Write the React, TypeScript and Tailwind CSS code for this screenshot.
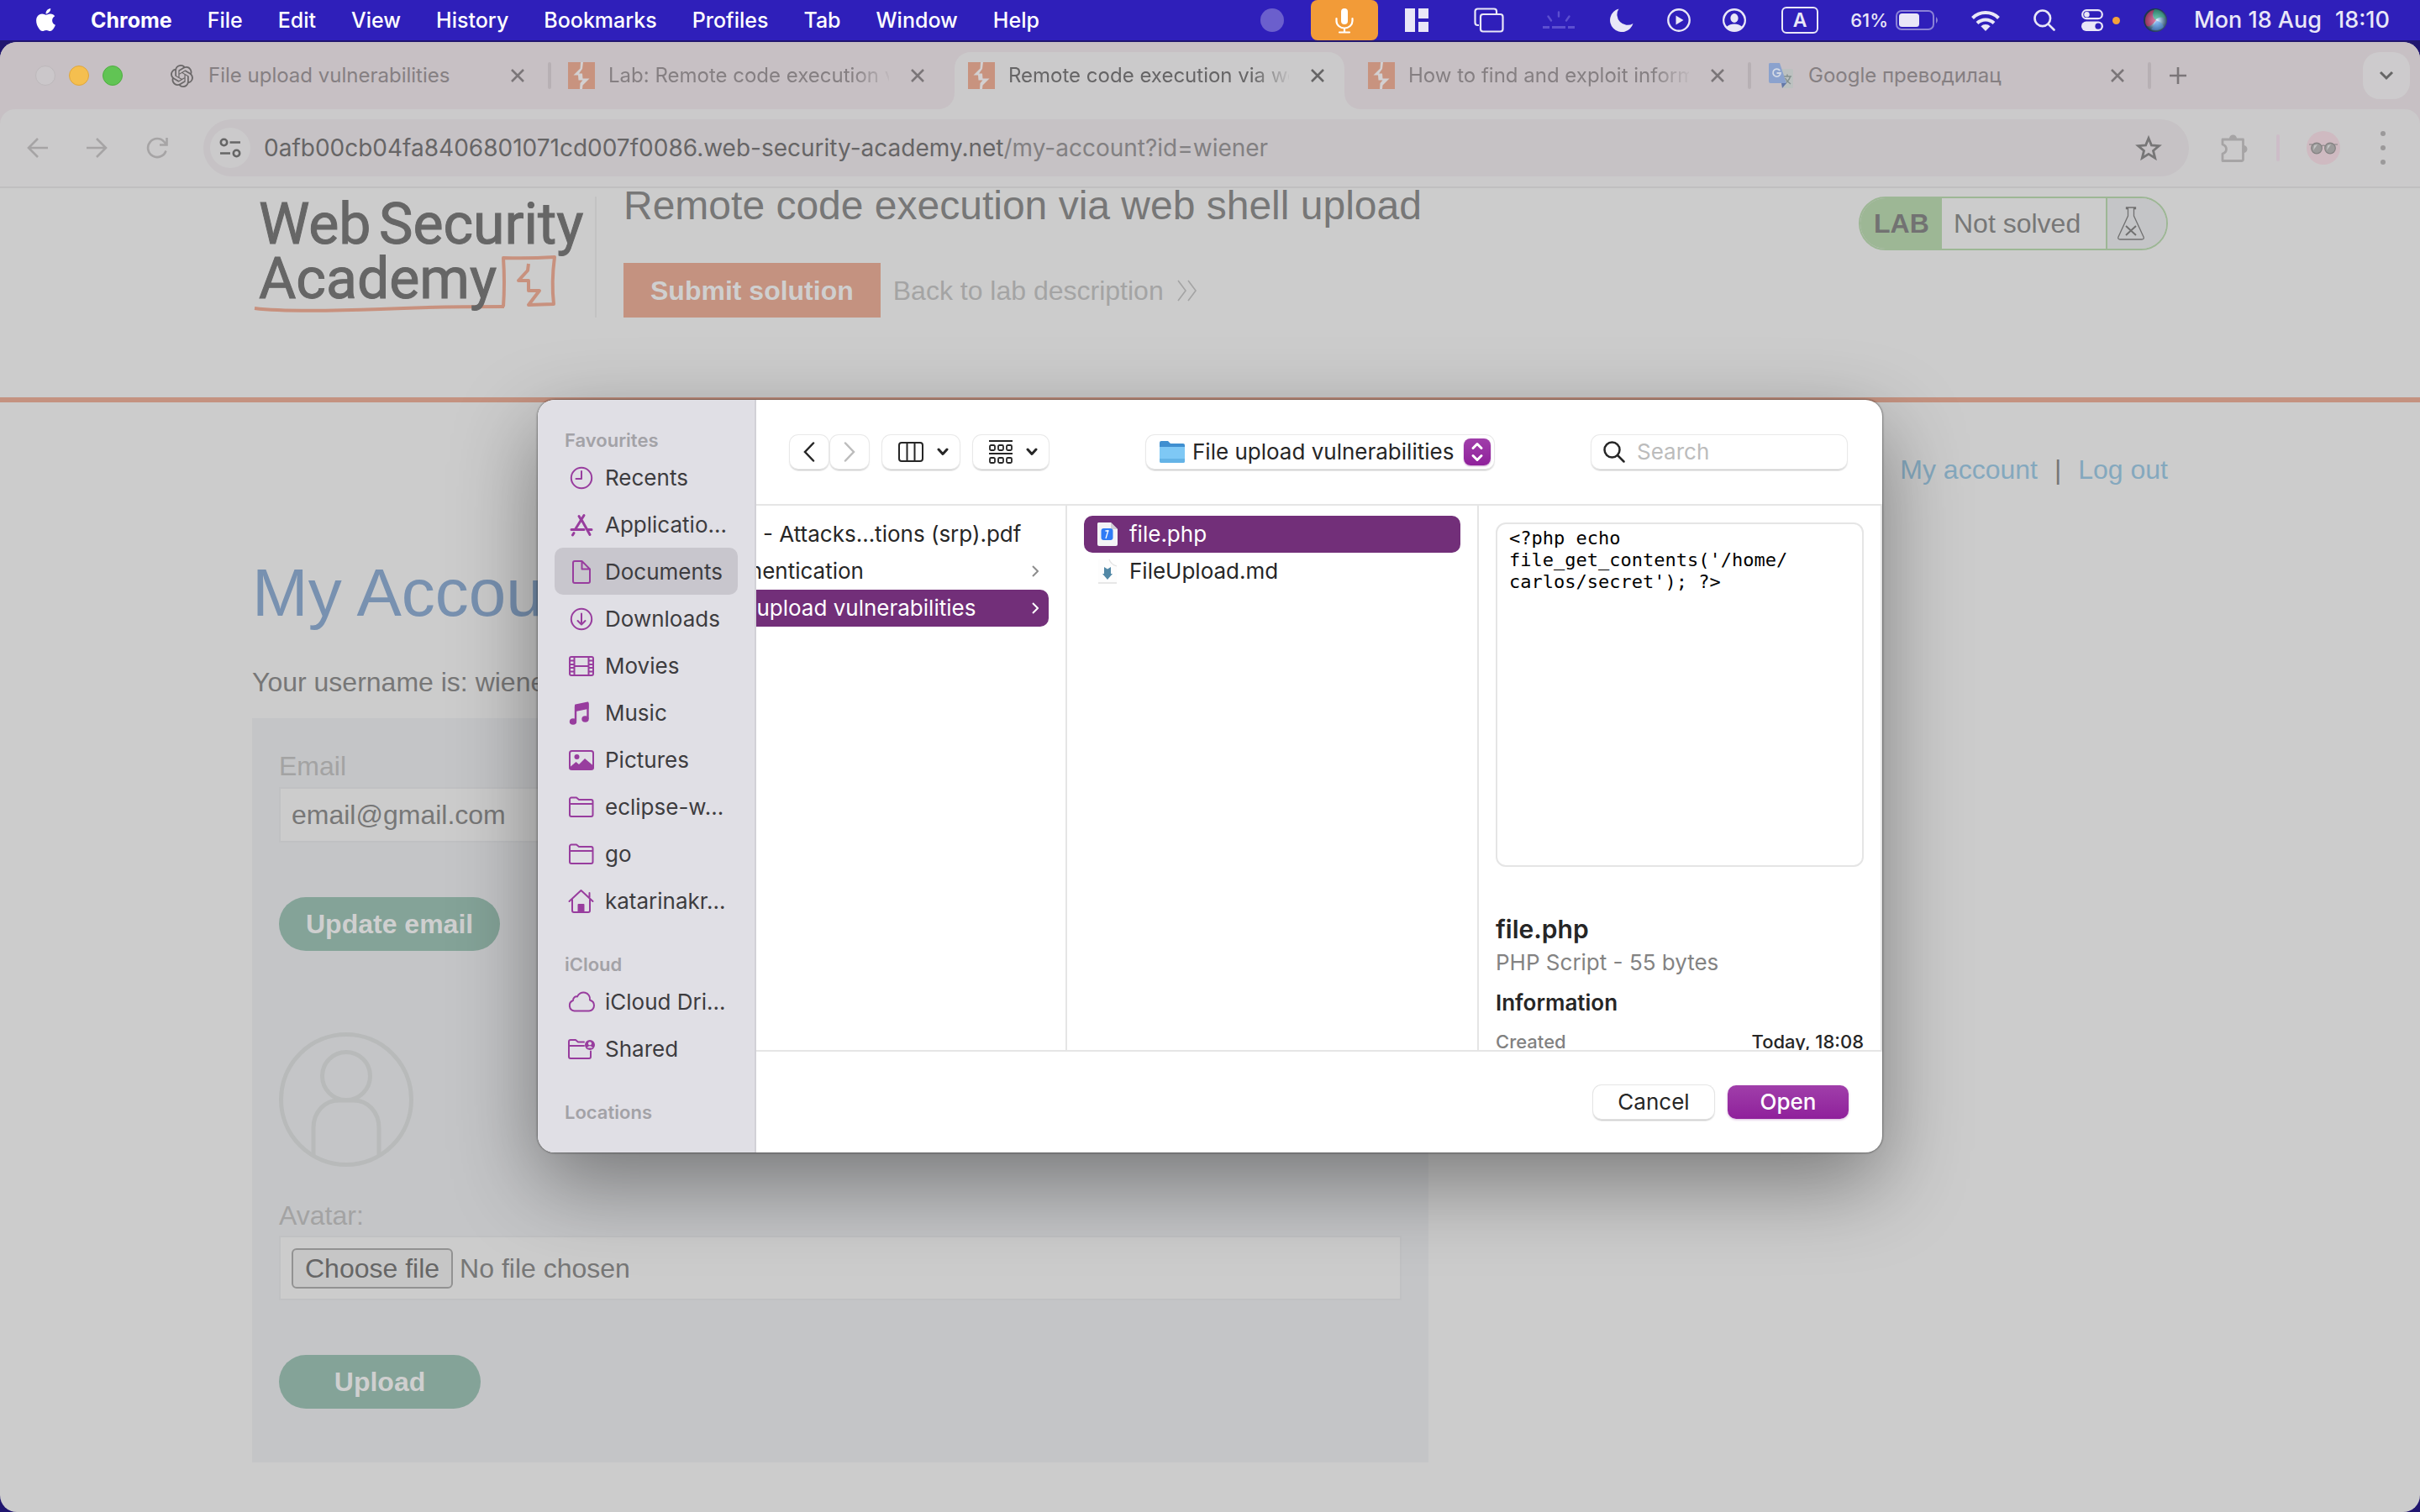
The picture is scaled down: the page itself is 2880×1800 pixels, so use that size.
import type { ReactNode } from "react";
import { FaApple } from "react-icons/fa";
import { SiOpenai } from "react-icons/si";

/* ---------- menu bar ---------- */

const menus = ["File", "Edit", "View", "History", "Bookmarks", "Profiles", "Tab", "Window", "Help"];

function MenuBar() {
  return (
    <header className="flex h-12 shrink-0 items-center overflow-hidden bg-[#2f1fba] pl-[39px] pr-9 text-[25px] leading-8 text-white">
      <FaApple className="size-[31px] -translate-y-px" aria-label="Apple" />
      <nav className="ml-[38px] flex items-center gap-[42px] font-medium">
        <button className="font-bold">Chrome</button>
        {menus.map((m) => (
          <button key={m}>{m}</button>
        ))}
      </nav>
      <div className="ml-auto flex h-12 items-center text-[#e9e7f7]">
        <span className="size-7 rounded-full bg-[#6b5fcd]" />
        <button aria-label="Microphone in use" className="ml-8 flex h-12 w-20 items-center justify-center rounded-lg bg-[#f29b38]">
          <svg viewBox="0 0 24 32" className="h-8 w-6" fill="none" stroke="#fff" strokeWidth="2.2" strokeLinecap="round">
            <rect x="8" y="2" width="8" height="19" rx="4" fill="#fff" stroke="none" />
            <path d="M2.500 14v3a9.500 8.500 0 0 0 19 0v-3M12 26v4M6 30.500h12" />
          </svg>
        </button>
        <svg viewBox="0 0 28 28" className="ml-8 size-7" fill="currentColor">
          <path d="M0 0h12v28H0zM16 0h12v12H16zM16 16h12v12H16z" />
        </svg>
        <svg viewBox="0 0 36 30" className="ml-[54px] h-[30px] w-9" fill="none" stroke="currentColor" strokeWidth="2.200">
          <path d="M6 21H4.500A3 3 0 0 1 1.500 18V4.500a3 3 0 0 1 3-3H24a3 3 0 0 1 3 3V7" />
          <rect x="8" y="8" width="26.500" height="20.500" rx="3" />
        </svg>
        <svg viewBox="0 0 38 22" className="ml-[46px] h-[22px] w-[38px]" fill="none" stroke="#5c4fd0" strokeWidth="2.400" strokeLinecap="round">
          <path d="M19 1.500v5M6.500 6.500l3.500 5M31.500 6.500l-3.500 5" />
          <path strokeWidth="3" strokeLinecap="butt" d="M0 19.500h8M11 19.500h16M30 19.500h8" />
        </svg>
        <svg viewBox="0 0 28 28" className="ml-[42px] size-7" fill="currentColor">
          <path d="M10.500 0.500A14 14 0 1 0 27.500 18 12.500 12.500 0 0 1 10.500 0.500z" />
        </svg>
        <svg viewBox="0 0 28 28" className="ml-10 size-7" fill="none" stroke="currentColor" strokeWidth="2.400">
          <circle cx="14" cy="14" r="12.700" />
          <path d="M10.500 8.500v11l9-5.500z" fill="currentColor" stroke="none" />
        </svg>
        <svg viewBox="0 0 28 28" className="ml-[38px] size-7" fill="currentColor">
          <path
            fillRule="evenodd"
            d="M14 0a14 14 0 1 0 0 28 14 14 0 0 0 0-28zm0 2.400a11.600 11.600 0 0 1 8.800 19.100C20.500 19.500 17.500 18.500 14 18.500s-6.500 1-8.800 3A11.600 11.600 0 0 1 14 2.400z"
          />
          <ellipse cx="14" cy="11.500" rx="4.600" ry="5.400" />
        </svg>
        <span className="ml-[42px] flex h-8 w-11 items-center justify-center rounded-md border-2 border-[#e9e7f7] text-[23px] font-semibold">A</span>
        <span className="ml-[38px] text-[22px] font-medium">61%</span>
        <svg viewBox="0 0 52 24" className="ml-[9px] h-6 w-[52px]" fill="none">
          <rect x="1" y="1" width="44" height="22" rx="6" stroke="#8b82d6" strokeWidth="2" />
          <rect x="4" y="4" width="24" height="16" rx="3.500" fill="#e9e7f7" />
          <path d="M48 8q4 4 0 8z" fill="#8b82d6" />
        </svg>
        <svg viewBox="0 0 34 25" className="ml-[38px] h-[25px] w-[34px]" fill="none" stroke="currentColor" strokeWidth="4">
          <path d="M1.500 9.500a22 22 0 0 1 31 0M7 15.500a14.300 14.300 0 0 1 20 0" />
          <path d="M17 25l-5.600-5.800a8 8 0 0 1 11.200 0z" fill="currentColor" stroke="none" />
        </svg>
        <svg viewBox="0 0 26 26" className="ml-10 size-[26px]" fill="none" stroke="currentColor" strokeWidth="2.600" strokeLinecap="round">
          <circle cx="10.800" cy="10.800" r="9.300" />
          <path d="M17.800 17.800l6.700 6.700" />
        </svg>
        <svg viewBox="0 0 26 26" className="ml-[31px] size-[26px]" fill="none">
          <rect x="1.200" y="1.200" width="23.600" height="10" rx="5" stroke="currentColor" strokeWidth="2.200" />
          <circle cx="6.500" cy="6.200" r="3.200" fill="currentColor" />
          <rect x="0" y="14.500" width="26" height="11.500" rx="5.700" fill="currentColor" />
          <circle cx="20" cy="20.200" r="3.600" fill="#2f1fba" />
        </svg>
        <span className="ml-[11px] size-[9px] rounded-full bg-[#f4a23a]" />
        <svg viewBox="0 0 28 28" className="ml-7 size-7">
          <defs>
            <radialGradient id="siri" cx="0.55" cy="0.52" r="0.5">
              <stop offset="0" stopColor="#fff" />
              <stop offset="0.250" stopColor="#a9d0ea" />
              <stop offset="1" stopColor="#1d3550" />
            </radialGradient>
          </defs>
          <circle cx="14" cy="14" r="14" fill="url(#siri)" />
          <path d="M2 14C2 8 7 2 13 2c-4 5-2 9 2 12-3 4-8 9-11 7-2-2-2-5-2-7z" fill="#e0315f" opacity="0.600" />
          <path d="M13 1c7 0 12 5 13 11-5-3-9-1-12 2-3-4-3-9-1-13z" fill="#2fae72" opacity="0.550" />
          <path d="M15 14c4 2 8 4 9 8-3 4-10 5-15 3 3-3 4-6 6-11z" fill="#4f8fe8" opacity="0.500" />
        </svg>
        <span className="ml-8 flex gap-4 text-[27px] font-medium">
          <span>Mon 18 Aug</span>
          <span>18:10</span>
        </span>
      </div>
    </header>
  );
}

/* ---------- browser chrome ---------- */

function BurpIcon() {
  return (
    <svg viewBox="0 0 32 32" className="size-8">
      <rect width="32" height="32" fill="#c8937f" />
      <path d="M15 0h3l-1 8-4 5.500h4l0.500 6h8l-8 8-0.500 4.500h-3l0.500-7 3-3.500h-5l-0.500-6H6.500l8-8z" fill="#d3d0d1" />
    </svg>
  );
}

function TranslateIcon() {
  return (
    <svg viewBox="0 0 32 32" className="size-8">
      <path d="M14 8h14a2 2 0 0 1 2 2v20a1 1 0 0 1-1 1H18z" fill="#bcc1c0" />
      <path d="M18 17h10M23 14.500v2.500M26.500 17c-1 4-4 7-6.500 9M20.500 19c1.500 3 3.500 5 6.500 7" stroke="#84918f" strokeWidth="1.500" fill="none" />
      <path d="M16 25h6l-5 6z" fill="#6377a8" />
      <path d="M2 1h12l8 24H3a2 2 0 0 1-2-2V3a2 2 0 0 1 1-2z" fill="#8ba2ce" />
      <path d="M14.200 10A4.500 4.500 0 1 0 15 13h-4.500" stroke="#d5dbe6" strokeWidth="1.800" fill="none" />
    </svg>
  );
}

function CloseIcon({ className }: { className: string }) {
  return (
    <svg viewBox="0 0 16 16" className={className} fill="none" stroke="currentColor" strokeWidth="2.600">
      <path d="M1 1l14 14M15 1L1 15" />
    </svg>
  );
}

type TabProps = { icon: ReactNode; title: string; fade?: boolean; active?: boolean; divider?: boolean };

function BrowserTab({ icon, title, fade, active, divider }: TabProps) {
  return (
    <div className="relative flex h-20 w-[476px] shrink items-center pl-5">
      {active && (
        <svg viewBox="0 0 508 68" className="absolute -left-4 bottom-0 h-[68px] w-[508px]" fill="#cbcacb">
          <path d="M0 68c12 0 20-8 20-20V20C20 8 28 0 40 0h424c12 0 20 8 20 20v28c0 12 8 20 20 20z" />
        </svg>
      )}
      <div className="relative flex w-full items-center">
        {icon}
        <button
          className={
            "ml-4 w-[334px] overflow-hidden whitespace-nowrap text-left text-[24px] leading-8 " +
            (fade ? "[mask-image:linear-gradient(to_right,black_290px,transparent_340px)] " : "") +
            (active ? "text-[#666566]" : "text-[#857f82]")
          }
        >
          {title}
        </button>
        <button aria-label={"Close " + title} className={"ml-[26px] " + (active ? "text-[#666566]" : "text-[#7b7679]")}>
          <CloseIcon className="size-4" />
        </button>
      </div>
      {divider && <span className="absolute right-0 top-6 h-8 w-1 rounded-full bg-[#b7b0b4]" />}
    </div>
  );
}

function TabStrip() {
  return (
    <div className="flex h-20 items-center bg-[#c7c0c4] pr-3">
      <div className="flex w-[180px] shrink-0 gap-4 pl-[42px]">
        <button aria-label="Close window" className="size-6 rounded-full border border-[#bdb8bb] bg-[#cbc7ca]" />
        <button aria-label="Minimise window" className="size-6 rounded-full border border-[#dfa63d] bg-[#f5bf4f]" />
        <button aria-label="Zoom window" className="size-6 rounded-full border border-[#4fae41] bg-[#61c454]" />
      </div>
      <BrowserTab
        icon={
          <span className="flex size-8 items-center justify-center">
            <SiOpenai className="size-[27px] text-[#6b6869]" />
          </span>
        }
        title="File upload vulnerabilities"
        divider
      />
      <BrowserTab icon={<BurpIcon />} title="Lab: Remote code execution v" fade />
      <BrowserTab icon={<BurpIcon />} title="Remote code execution via we" fade active />
      <BrowserTab icon={<BurpIcon />} title="How to find and exploit inform" fade divider />
      <BrowserTab icon={<TranslateIcon />} title="Google преводилац" divider />
      <button aria-label="New tab" className="ml-[22px] text-[#7b7679]">
        <svg viewBox="0 0 20 20" className="size-5" fill="none" stroke="currentColor" strokeWidth="2.600">
          <path d="M10 0v20M0 10h20" />
        </svg>
      </button>
      <button aria-label="Search tabs" className="ml-auto flex size-14 items-center justify-center rounded-[20px] bg-[#cdcbcd] text-[#666]">
        <svg viewBox="0 0 18 12" className="h-3 w-[18px]" fill="none" stroke="currentColor" strokeWidth="3">
          <path d="M2 2l7 7 7-7" />
        </svg>
      </button>
    </div>
  );
}

function Toolbar() {
  return (
    <div className="bg-[#c7c0c4]">
      <div className="flex h-[94px] items-center rounded-t-[18px] border-b-2 border-[#c0bfc0] bg-[#cbcacb] pl-8 text-[#a6a4a5]">
        <button aria-label="Back">
          <svg viewBox="0 0 25 24" className="h-6 w-[25px]" fill="none" stroke="currentColor" strokeWidth="2.600">
            <path d="M25 12H2M13 1L2 12l11 11" />
          </svg>
        </button>
        <button aria-label="Forward" className="ml-[46px]">
          <svg viewBox="0 0 25 24" className="h-6 w-[25px]" fill="none" stroke="currentColor" strokeWidth="2.600">
            <path d="M0 12h23M12 1l11 11-11 11" />
          </svg>
        </button>
        <button aria-label="Reload" className="ml-[46px]">
          <svg viewBox="0 0 26 26" className="size-[26px]" fill="none" stroke="currentColor" strokeWidth="2.600">
            <path d="M23.500 16.500A11 11 0 1 1 21.500 6L24 9M24.500 1v8.500H16" />
          </svg>
        </button>
        <div className="ml-[42px] flex h-[68px] flex-1 items-center rounded-full bg-[#c6c2c5] pl-2 pr-8">
          <button aria-label="View site information" className="flex size-12 items-center justify-center rounded-full bg-[#cbcacb] text-[#666]">
            <svg viewBox="0 0 26 24" className="h-6 w-[26px]" fill="none" stroke="currentColor" strokeWidth="2.600">
              <circle cx="5.500" cy="5.500" r="3.700" />
              <path d="M12.500 5.500H25M1 18.500h12" />
              <circle cx="20.500" cy="18.500" r="3.700" />
            </svg>
          </button>
          <div role="textbox" aria-label="Address and search bar" className="ml-4 flex-1 whitespace-nowrap text-[28px] leading-9 text-[#828082]">
            <span className="text-[#666566]">0afb00cb04fa8406801071cd007f0086.web-security-academy.net</span>
            /my-account?id=wiener
          </div>
          <button aria-label="Bookmark this tab" className="text-[#777677]">
            <svg viewBox="0 0 32 30" className="h-[30px] w-8" fill="none" stroke="currentColor" strokeWidth="2.800">
              <path d="M16 3.500l3.400 8.400 9 .7-6.900 5.800 2.200 8.800L16 22.400l-7.700 4.800 2.200-8.800-6.900-5.800 9-.7z" />
            </svg>
          </button>
        </div>
        <button aria-label="Extensions" className="ml-9">
          <svg viewBox="0 0 34 34" className="size-[34px]" fill="none" stroke="currentColor" strokeWidth="2.800">
            <path d="M4 7h24.500v23.500a2 2 0 0 1-2 2H4V24c6-2 6-9 0-11z" strokeLinejoin="round" />
            <path d="M12 6a4.500 4.500 0 0 1 9 0zM29 14a4.500 4.500 0 0 1 0 9z" fill="currentColor" stroke="none" />
          </svg>
        </button>
        <span className="ml-[34px] h-8 w-1 rounded-full bg-[#cdbdc8]" />
        <button aria-label="Profile" className="ml-8 flex size-10 items-center justify-center rounded-full bg-[#cfbac1]">
          <svg viewBox="0 0 34 16" className="h-4 w-[34px]" fill="#9d9b9b" stroke="#848282" strokeWidth="1.200">
            <circle cx="9" cy="8.500" r="6.300" />
            <circle cx="25" cy="8.500" r="6.300" />
            <path d="M0 4h4M30 4h4M14.500 6q2.500-2 5 0" fill="none" />
            <path d="M6 5l4-1-5 7zM22 5l4-1-5 7z" fill="#c4c4c4" stroke="none" />
          </svg>
        </button>
        <button aria-label="Chrome menu" className="ml-[48px] mr-[41px] flex flex-col gap-[11px]">
          <span className="size-1.5 rounded-full bg-[#9b999a]" />
          <span className="size-1.5 rounded-full bg-[#9b999a]" />
          <span className="size-1.5 rounded-full bg-[#9b999a]" />
        </button>
      </div>
    </div>
  );
}

/* ---------- web page ---------- */

function AcademyLogo() {
  return (
    <svg viewBox="0 0 400 154" className="h-[154px] w-[400px] shrink-0" role="img" aria-label="Web Security Academy">
      <g fill="none" stroke="#c8917e" strokeLinejoin="round">
        <path strokeWidth="4" d="M3 143q40 5 150 1q60-3 147-3" />
        <path strokeWidth="4" d="M299 141q2-28 0-58q30 1 61-1q-4 30-1 56l-30 1 13-17h-13v-12h-12l11-12 1-8" />
      </g>
      <g fill="#666" stroke="#666" strokeWidth="1" fontSize="68" fontWeight="400" className="font-['Roboto',sans-serif]">
        <text x="8" y="66">Web</text>
        <text x="151" y="66">Security</text>
        <text x="8" y="131">Academy</text>
      </g>
    </svg>
  );
}

function PageHeader() {
  return (
    <div className="border-b-[6px] border-[#c49280]">
      <div className="mx-auto flex max-w-[2280px] items-start pb-[95px]">
        <AcademyLogo />
        <div className="ml-2 mt-2.5 h-36 w-0.5 bg-[#c3c3c3]" />
        <div className="ml-8">
          <h2 className="text-5xl leading-[42px] text-[#777]">Remote code execution via web shell upload</h2>
          <div className="mt-[47px] flex items-center gap-[15px]">
            <button className="h-[65px] bg-[#c49280] px-8 text-[32px] font-bold leading-10 text-[#cfcfcf]">Submit solution</button>
            <a href="#description" className="flex items-center gap-4 text-[32px] leading-10 text-[#a4a4a4]">
              Back to lab description
              <svg viewBox="0 0 24 26" className="h-[26px] w-6" fill="none" stroke="currentColor" strokeWidth="1.600">
                <path d="M1 1l9 12-9 12M13 1l9 12-9 12" />
              </svg>
            </a>
          </div>
        </div>
        <div className="ml-auto mt-2.5 flex h-16 overflow-hidden rounded-full border-2 border-[#9db795] text-[32px] leading-10 text-[#777]">
          <span className="flex w-[97px] items-center bg-[#9db795] pl-4 font-bold text-[#727272]">LAB</span>
          <span className="flex w-[195px] items-center pl-3.5">Not solved</span>
          <span className="flex w-[72px] items-center border-l-2 border-[#9db795] bg-[#c4c5c7] pl-3">
            <svg viewBox="0 0 32 40" className="h-10 w-8" fill="none" stroke="#707070">
              <path strokeWidth="1.300" d="M10.500 1h11v1.500h-2V11L31 36q1 3-2 3H3q-3 0-2-3L12.500 11V2.500h-2z" />
              <path strokeWidth="2" d="M10 23l12 11M22 23L10 34" />
            </svg>
          </span>
        </div>
      </div>
    </div>
  );
}

function AccountPage() {
  return (
    <main className="mx-auto max-w-[2280px] pt-[60px] text-[32px] leading-10 text-[#777]">
      <nav className="flex justify-end gap-5 text-[#84a8be]">
        <a href="#account">My account</a>
        <span className="text-[#777]">|</span>
        <a href="#logout">Log out</a>
      </nav>
      <h1 className="mt-[87px] text-[80px] leading-[80px] text-[#7891b0]">My Account</h1>
      <p className="mt-[46px]">Your username is: wiener</p>
      <section className="mt-[23px] flex w-[1400px] max-w-full flex-col items-start bg-[#c4c5c7] px-8 pb-16 pt-[37px]">
        <label htmlFor="email" className="text-[#a3a3a3]">
          Email
        </label>
        <input
          id="email"
          type="email"
          defaultValue="email@gmail.com"
          className="mt-[5px] h-[66px] w-full border-2 border-[#c0c1c3] bg-[#ccc] px-[13px] outline-none"
        />
        <button className="mt-[65px] h-16 rounded-full bg-[#84a398] px-8 font-bold text-[#cfcfcf]">Update email</button>
        <svg viewBox="0 0 160 160" className="mt-[97px] size-40" fill="none" stroke="#b8baba" strokeWidth="5">
          <circle cx="80" cy="80" r="77.500" />
          <circle cx="80" cy="52" r="28.500" />
          <path d="M41 146v-32c0-20 14-33 30-33h18c16 0 30 13 30 33v32" />
        </svg>
        <label htmlFor="avatar" className="mt-[38px] text-[#a3a3a3]">
          Avatar:
        </label>
        <div className="mt-1 flex h-[77px] w-full items-center border-2 border-[#c0c1c3] bg-[#ccc] px-[13px]">
          <input id="avatar" type="file" className="sr-only" />
          <label htmlFor="avatar" className="flex h-12 items-center rounded-md border-2 border-[#929292] bg-[#c6c6c6] px-3.5 text-[#666]">
            Choose file
          </label>
          <span className="ml-2">No file chosen</span>
        </div>
        <button className="mt-[65px] h-16 w-60 rounded-full bg-[#84a398] font-bold text-[#cfcfcf]">Upload</button>
      </section>
    </main>
  );
}

/* ---------- open-file dialog ---------- */

function SideIcon({ children }: { children: ReactNode }) {
  return (
    <svg viewBox="0 0 34 32" className="h-8 w-[34px] shrink-0" fill="none" stroke="#983d9e" strokeWidth="2" strokeLinejoin="round" strokeLinecap="round">
      {children}
    </svg>
  );
}

const folderShape = (
  <path d="M3 25V6.500a2 2 0 0 1 2-2h6l3 2.500h14.500a2 2 0 0 1 2 2V25a2 2 0 0 1-2 2H5a2 2 0 0 1-2-2zM3 12h27.500" />
);

const favourites: { name: string; icon: ReactNode; current?: boolean }[] = [
  {
    name: "Recents",
    icon: (
      <>
        <circle cx="17" cy="16" r="12.200" />
        <path d="M17 8v9h-6.500" />
      </>
    ),
  },
  {
    name: "Applicatio...",
    icon: (
      <>
        <path strokeWidth="3" d="M14 5.500l3 5M20 4.500L10 20.500M17.500 10.500l9.500 17M5 21.500h15M25 21.500h4" />
        <path strokeWidth="3" d="M8 25.500l-1.500 2.500" />
      </>
    ),
  },
  {
    name: "Documents",
    current: true,
    icon: <path d="M9 3h8.500L27 12.500V27a2 2 0 0 1-2 2H9a2 2 0 0 1-2-2V5a2 2 0 0 1 2-2zM17.500 3v9.500H27" />,
  },
  {
    name: "Downloads",
    icon: (
      <>
        <circle cx="17" cy="16" r="12.200" />
        <path d="M17 9.500v12.500M12.500 18l4.500 4.500 4.500-4.500" />
      </>
    ),
  },
  {
    name: "Movies",
    icon: (
      <>
        <rect x="3" y="5" width="28" height="22" rx="2" />
        <path d="M8.500 5v22M25.500 5v22M8.500 16h17M3 9.500h5M3 14h5M3 18h5M3 22.500h5M26 9.500h5M26 14h5M26 18h5M26 22.500h5" />
      </>
    ),
  },
  {
    name: "Music",
    icon: (
      <>
        <path d="M10 6.500L24.500 3.500v6.500L10 13z" fill="#983d9e" />
        <path strokeWidth="2.400" d="M10 8v17M24.500 5v17" />
        <ellipse cx="7" cy="26" rx="3.200" ry="2.800" fill="#983d9e" />
        <ellipse cx="21.500" cy="23" rx="3.200" ry="2.800" fill="#983d9e" />
      </>
    ),
  },
  {
    name: "Pictures",
    icon: (
      <>
        <rect x="3" y="5" width="28" height="22" rx="2.500" />
        <path d="M3.500 24l7-6 3.500 3 7-7 10 8.500V26H4z" fill="#983d9e" stroke="none" />
        <path d="M4 25.500h26" strokeWidth="3" />
        <circle cx="11.500" cy="12" r="3" fill="#983d9e" stroke="none" />
      </>
    ),
  },
  { name: "eclipse-w...", icon: folderShape },
  { name: "go", icon: folderShape },
  {
    name: "katarinakr...",
    icon: (
      <>
        <path d="M2.500 16L16.500 3l14 13M6 14v13a2 2 0 0 0 2 2h17a2 2 0 0 0 2-2V14M26.500 11V6" />
        <path d="M13.500 29v-9h6v9z" fill="#983d9e" />
      </>
    ),
  },
];

const icloud: { name: string; icon: ReactNode; current?: boolean }[] = [
  {
    name: "iCloud Dri...",
    icon: <path d="M8.500 26.500a6.500 6.500 0 0 1-1.500-12.500c0-4 3-5 5-4.500a7.800 7.800 0 0 1 15 4c3 1 5 3.500 5 6.500 0 4-3 6.500-6 6.500z" />,
  },
  {
    name: "Shared",
    icon: (
      <>
        <path d="M20 7.500h-7L10 5H4a2 2 0 0 0-2 2v18a2 2 0 0 0 2 2h22a2 2 0 0 0 2-2v-6.500M2 12h18" />
        <circle cx="27" cy="11" r="6" fill="#983d9e" stroke="none" />
        <circle cx="27" cy="9.200" r="2" fill="#e0dfe5" stroke="none" />
        <path d="M23.500 14.500q3.500-4.500 7 0z" fill="#e0dfe5" stroke="none" />
      </>
    ),
  },
];

function SideGroup({ title, items }: { title: string; items: typeof favourites }) {
  return (
    <section className="mt-8">
      <h3 className="h-8 px-3 text-[22px] font-semibold leading-8 text-[#a3a2a7]">{title}</h3>
      <ul>
        {items.map((it) => (
          <li key={it.name}>
            <button className={"flex h-14 w-full items-center gap-[11px] whitespace-nowrap rounded-[10px] pl-[15px] pt-0.5 " + (it.current ? "bg-[#c8c6cd]" : "")}>
              <SideIcon>{it.icon}</SideIcon>
              {it.name}
            </button>
          </li>
        ))}
      </ul>
    </section>
  );
}

function Chevron({ className }: { className: string }) {
  return (
    <svg viewBox="0 0 14 10" className={"h-2.5 w-3.5 " + className} fill="none" stroke="currentColor" strokeWidth="3" strokeLinecap="round" strokeLinejoin="round">
      <path d="M2 2l5 5.500L12 2" />
    </svg>
  );
}

function DialogToolbar() {
  const box = "flex h-10 items-center justify-center rounded-[10px] bg-white shadow-[0_0_0_1px_#e9e9e9,0_2px_2px_#bdbdbd]";
  return (
    <div className="flex h-[126px] shrink-0 items-center border-b-2 border-[#e5e5e5] pl-10 pr-[42px]">
      <button aria-label="Back" className={box + " w-[46px]"}>
        <svg viewBox="0 0 14 24" className="h-6 w-3.5" fill="none" stroke="#262626" strokeWidth="2.500" strokeLinecap="round">
          <path d="M12 1.500L2 12l10 10.500" />
        </svg>
      </button>
      <button aria-label="Forward" className={box + " ml-0.5 w-[46px]"}>
        <svg viewBox="0 0 14 24" className="h-6 w-3.5" fill="none" stroke="#bcbcbc" strokeWidth="2.500" strokeLinecap="round">
          <path d="M2 1.500L12 12 2 22.500" />
        </svg>
      </button>
      <button aria-label="Column view" className={box + " ml-4 w-[92px] gap-4 pl-1.5"}>
        <svg viewBox="0 0 30 24" className="h-6 w-[30px]" fill="none" stroke="#262626" strokeWidth="2">
          <rect x="1" y="1" width="28" height="22" rx="3" />
          <path d="M10.500 1v22M19.500 1v22" />
        </svg>
        <Chevron className="text-[#262626]" />
      </button>
      <button aria-label="Group items" className={box + " ml-4 w-[90px] gap-4 pl-1.5"}>
        <svg viewBox="0 0 28 28" className="size-7" fill="none" stroke="#262626" strokeWidth="1.800">
          <path d="M0 1h28M0 16h28" />
          <rect x="1" y="6" width="6" height="6" rx="1.500" />
          <rect x="11" y="6" width="6" height="6" rx="1.500" />
          <rect x="21" y="6" width="6" height="6" rx="1.500" />
          <rect x="1" y="21" width="6" height="6" rx="1.500" />
          <rect x="11" y="21" width="6" height="6" rx="1.500" />
          <rect x="21" y="21" width="6" height="6" rx="1.500" />
        </svg>
        <Chevron className="text-[#262626]" />
      </button>
      <div className={box + " relative mx-auto w-[414px]"}>
        <svg viewBox="0 0 30 28" className="pointer-events-none absolute left-4 top-1.5 h-7 w-[30px]">
          <path d="M0 3a2 2 0 0 1 2-2h8l3 3h15a2 2 0 0 1 2 2v18H0z" fill="#3f8fd0" />
          <path d="M0 8h30v17a2 2 0 0 1-2 2H2a2 2 0 0 1-2-2z" fill="#7ec8f5" />
          <path d="M0 22h30v3a2 2 0 0 1-2 2H2a2 2 0 0 1-2-2z" fill="#64b3e6" />
        </svg>
        <select aria-label="Location" className="h-10 w-full appearance-none rounded-[10px] bg-transparent pl-[55px] text-[#262626] outline-none">
          <option>File upload vulnerabilities</option>
        </select>
        <span className="pointer-events-none absolute right-1 top-1 flex size-8 items-center justify-center rounded-lg bg-linear-to-b from-[#a03eaa] to-[#8f1f9b] shadow-[0_1px_2px_#c79bcc]">
          <svg viewBox="0 0 16 24" className="h-6 w-4" fill="none" stroke="#fff" strokeWidth="3" strokeLinecap="round" strokeLinejoin="round">
            <path d="M3 7.500l5-5 5 5M3 16.500l5 5 5-5" />
          </svg>
        </span>
      </div>
      <label className={box + " w-[304px] justify-start pl-3.5"}>
        <svg viewBox="0 0 26 26" className="size-[26px] shrink-0" fill="none" stroke="#262626" strokeWidth="2.500" strokeLinecap="round">
          <circle cx="10.500" cy="10.500" r="9" />
          <path d="M17 17l7.500 7.500" />
        </svg>
        <input type="search" aria-label="Search" placeholder="Search" className="ml-3.5 w-full bg-transparent outline-none placeholder:text-[#bcbcbc]" />
      </label>
    </div>
  );
}

function RowArrow({ className }: { className: string }) {
  return (
    <svg viewBox="0 0 8 14" className={"ml-auto h-3.5 w-2 " + className} fill="none" stroke="currentColor" strokeWidth="2">
      <path d="M1 1l6 6-6 6" />
    </svg>
  );
}

function PhpIcon() {
  return (
    <svg viewBox="0 0 26 30" className="h-[30px] w-[26px]">
      <path d="M2 1h15l8 8v18a2 2 0 0 1-2 2H3a2 2 0 0 1-2-2V2z" fill="#f4f4f6" />
      <path d="M17 1v6a2 2 0 0 0 2 2h6z" fill="#cfcfd6" />
      <rect x="5.500" y="8" width="14" height="14" rx="3" fill="#2f7cf6" />
      <path d="M10.500 11h4M14 10l-3 10" stroke="#fff" strokeWidth="1.300" />
    </svg>
  );
}

function MarkdownIcon() {
  return (
    <svg viewBox="0 0 26 30" className="h-[30px] w-[26px]">
      <path d="M2 1h13l9 8v20H2z" fill="#fdfdfd" />
      <path d="M15 1q2 6 9 8" fill="none" stroke="#e2e2e2" strokeWidth="1.200" />
      <path d="M2 29h22" stroke="#d0d0d0" strokeWidth="1" />
      <path d="M9 10l4 2.500 4-2.500v8h2L13 25l-6-7h2z" fill="#5288a6" />
    </svg>
  );
}

function FileBrowser() {
  return (
    <div className="flex h-[648px] text-[#262626]">
      <ul className="w-[370px] shrink-0 overflow-hidden border-r-2 border-[#e5e5e5] pr-5 pt-3">
        <li className="flex h-11 items-center whitespace-nowrap pl-2">- Attacks...tions (srp).pdf</li>
        <li className="-ml-[50px] flex h-11 items-center whitespace-nowrap">
          Authentication
          <RowArrow className="mr-3 text-[#8e8e8e]" />
        </li>
        <li className="-ml-[50px] flex h-11 items-center whitespace-nowrap rounded-[10px] bg-[#722f79] text-white">
          File upload vulnerabilities
          <RowArrow className="mr-3 text-white" />
        </li>
      </ul>
      <ul className="flex-1 border-r-2 border-[#e5e5e5] px-5 pt-3">
        <li className="flex h-11 items-center gap-[13px] rounded-[10px] bg-[#722f79] pl-[15px] text-white">
          <PhpIcon />
          file.php
        </li>
        <li className="flex h-11 items-center gap-[13px] pl-[15px]">
          <MarkdownIcon />
          FileUpload.md
        </li>
      </ul>
      <div className="w-[480px] shrink-0 overflow-hidden border-r-2 border-[#e5e5e5] px-5 pt-5">
        <pre className="h-[410px] whitespace-pre rounded-xl border-2 border-[#e5e5e5] px-3.5 pt-1 font-['DejaVu_Sans_Mono',monospace] text-[22px] leading-[26px] text-black">
          {"<?php echo\nfile_get_contents('/home/\ncarlos/secret'); ?>"}
        </pre>
        <h3 className="mt-[54px] text-[30px] font-semibold leading-10">file.php</h3>
        <p className="mt-1 leading-8 text-[#838383]">PHP Script - 55 bytes</p>
        <h4 className="mt-4 font-semibold leading-8">Information</h4>
        <div className="mt-4 flex justify-between text-[22px] font-medium leading-7">
          <span className="text-[#818181]">Created</span>
          <span>Today, 18:08</span>
        </div>
      </div>
    </div>
  );
}

function OpenDialog() {
  return (
    <div
      role="dialog"
      aria-label="Open file"
      className="absolute left-1/2 top-[426px] flex w-[1600px] -translate-x-1/2 overflow-hidden rounded-[20px] bg-white font-['Inter',sans-serif] text-[26px] leading-8 shadow-[0_0_2px_1px_rgba(0,0,0,0.35),0_36px_100px_rgba(0,0,0,0.4)]"
    >
      <aside className="w-[260px] shrink-0 border-r-2 border-[#d2d1d7] bg-[#e0dfe5] pb-8 pl-5 pr-5 text-[#3d3c3f]">
        <SideGroup title="Favourites" items={favourites} />
        <SideGroup title="iCloud" items={icloud} />
        <SideGroup title="Locations" items={[]} />
      </aside>
      <div className="flex min-w-0 flex-1 flex-col">
        <DialogToolbar />
        <FileBrowser />
        <div className="flex flex-1 items-center justify-end gap-4 border-t-2 border-[#e5e5e5] pr-10">
          <button className="h-10 w-36 rounded-[10px] bg-white text-[#262626] shadow-[0_0_0_1px_#e5e5e5,0_2px_2px_#bdbdbd]">Cancel</button>
          <button className="h-10 w-36 rounded-[10px] bg-linear-to-b from-[#a03eaa] to-[#8f1f9b] font-medium text-white shadow-[0_1px_3px_#d5b4d9]">Open</button>
        </div>
      </div>
    </div>
  );
}

export default function App() {
  return (
    <div className="flex h-screen flex-col overflow-hidden bg-[#20166f] font-['Inter',sans-serif]">
      <MenuBar />
      <div className="relative mt-0.5 flex-1 overflow-hidden rounded-[20px] bg-[#ccc]">
        <TabStrip />
        <Toolbar />
        <div className="font-['Liberation_Sans',Arial,sans-serif]">
          <PageHeader />
          <AccountPage />
        </div>
        <OpenDialog />
      </div>
    </div>
  );
}
